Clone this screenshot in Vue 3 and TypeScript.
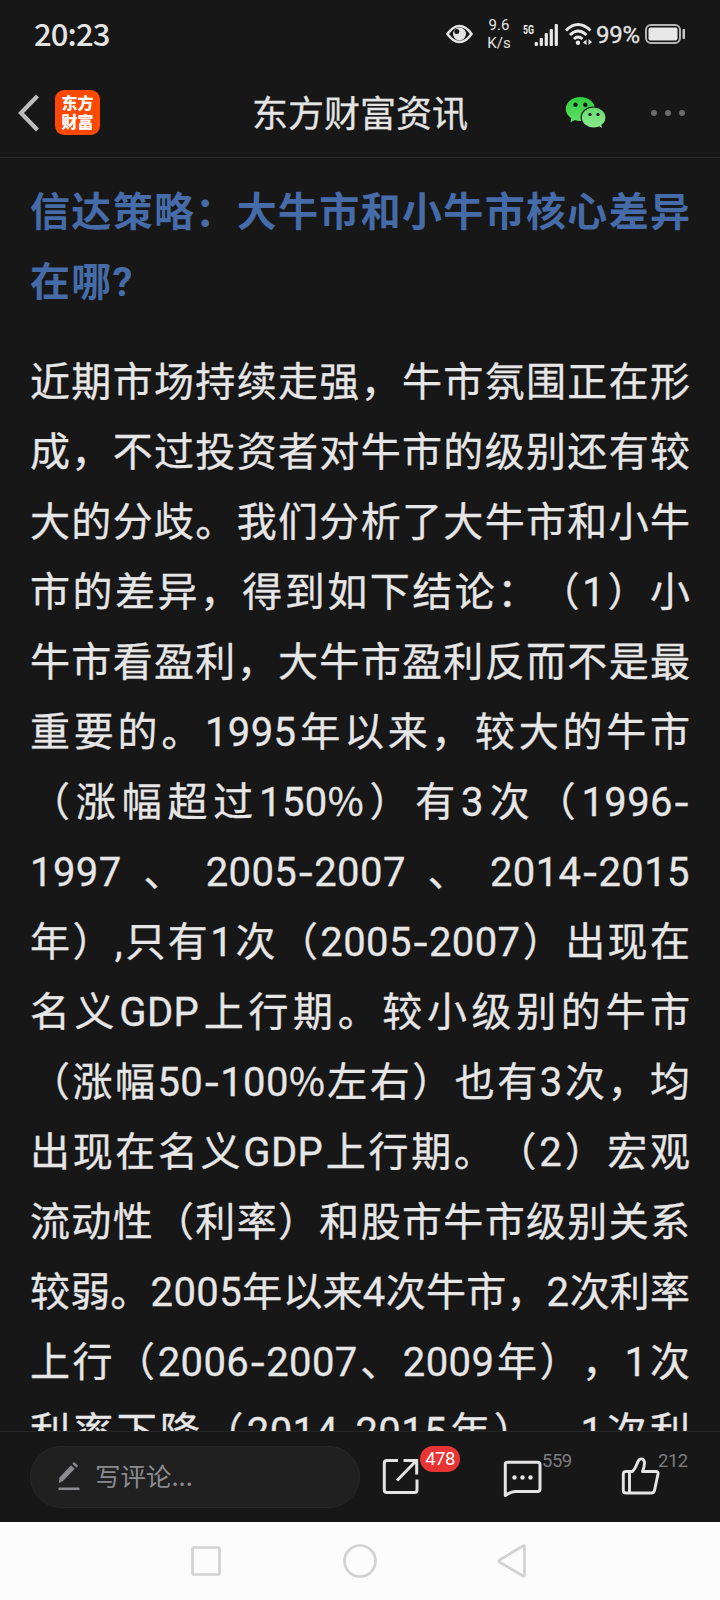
<script setup lang="ts">
interface Run {
  text: string
  kind: 'cjk' | 'latin' | 'dash' | 'pct'
}

const titleLines: string[] = ['信达策略：大牛市和小牛市核心差异', '在哪?']

const bodyLines: string[] = [
  '近期市场持续走强，牛市氛围正在形',
  '成，不过投资者对牛市的级别还有较',
  '大的分歧。我们分析了大牛市和小牛',
  '市的差异，得到如下结论：（1）小',
  '牛市看盈利，大牛市盈利反而不是最',
  '重要的。1995年以来，较大的牛市',
  '（涨幅超过150%）有3次（1996-',
  '1997、2005-2007、2014-2015',
  '年）,只有1次（2005-2007）出现在',
  '名义GDP上行期。较小级别的牛市',
  '（涨幅50-100%左右）也有3次，均',
  '出现在名义GDP上行期。（2）宏观',
  '流动性（利率）和股市牛市级别关系',
  '较弱。2005年以来4次牛市，2次利率',
  '上行（2006-2007、2009年），1次',
  '利率下降（2014-2015年），1次利',
]

function toRuns(line: string): Run[] {
  const parts = line.match(/-|%|[0-9A-Z,]+|[^0-9A-Z,%-]+/g) ?? []
  return parts.map((text): Run => {
    if (text === '-') return { text, kind: 'dash' }
    if (text === '%') return { text, kind: 'pct' }
    return { text, kind: /^[0-9A-Z,]/.test(text) ? 'latin' : 'cjk' }
  })
}

const paragraphs: Run[][] = bodyLines.map(toRuns)
</script>

<template>
  <div class="screen">
    <div class="status">
      <span class="time">20:23</span>
      <div class="tray">
        <svg class="eye" width="27" height="20" viewBox="0 0 27 20">
          <path d="M1.500 10Q7 2 13.500 2T25.500 10Q20 18 13.500 18T1.500 10Z" fill="none" stroke="#e4e4e4" stroke-width="2.500" />
          <circle cx="13.500" cy="10" r="6.500" fill="#e4e4e4" />
          <circle cx="10.800" cy="7.600" r="2.500" fill="#171717" />
        </svg>
        <div class="speed"><span>9.6</span><span>K/s</span></div>
        <svg class="signal" width="36" height="26" viewBox="0 0 36 26">
          <text x="0" y="13" class="gen" textLength="11" lengthAdjust="spacingAndGlyphs">5G</text>
          <g fill="#e8e8e8">
            <rect x="11.700" y="21" width="3.200" height="4" rx="1" />
            <rect x="16.700" y="17" width="3.200" height="8" rx="1" />
            <rect x="21.700" y="12" width="3.200" height="13" rx="1" />
            <rect x="26.700" y="8" width="3.200" height="17" rx="1" />
            <rect x="31.700" y="3" width="3.200" height="22" rx="1" />
          </g>
        </svg>
        <svg class="wifi" width="27" height="24" viewBox="0 0 27 24">
          <g fill="none" stroke="#e8e8e8" stroke-width="2.900">
            <path d="M1 8.500Q13 -3.500 25.500 8.500" />
            <path d="M5 13Q13 5 21.500 13" />
            <path d="M9 17Q13 13 17.500 17" />
          </g>
          <circle cx="13" cy="20.800" r="2.200" fill="#e8e8e8" />
          <path d="M18 20.500L21.500 17.500V23ZM27 20L23.500 17V23Z" fill="#e8e8e8" />
        </svg>
        <span class="percent">99%</span>
        <svg class="battery" width="41" height="20" viewBox="0 0 41 20">
          <rect x="1" y="1" width="34" height="18" rx="5" fill="none" stroke="#b5b5b5" stroke-width="2" />
          <rect x="3.500" y="3.500" width="29" height="13" rx="2" fill="#e8e8e8" />
          <rect x="37.500" y="5" width="2.500" height="10" rx="1" fill="#c8c8c8" />
        </svg>
      </div>
    </div>

    <header class="header">
      <div class="side">
        <svg class="back" width="22" height="38" viewBox="0 0 22 38">
          <path d="M20.500 2L4 19L20.500 36" fill="none" stroke="#bcbcbc" stroke-width="4.200" />
        </svg>
        <div class="logo"><span>东方</span><span>财富</span></div>
      </div>
      <h1 class="name">东方财富资讯</h1>
      <div class="side end">
        <svg class="wechat" width="42" height="34" viewBox="0 0 42 34">
          <defs>
            <linearGradient id="wcBack" x1="0" y1="0" x2="0" y2="1">
              <stop offset="0" stop-color="#2fce3c" />
              <stop offset="1" stop-color="#5fe069" />
            </linearGradient>
            <linearGradient id="wcFront" x1="0" y1="0" x2="0" y2="1">
              <stop offset="0" stop-color="#65da6c" />
              <stop offset="1" stop-color="#8dec92" />
            </linearGradient>
          </defs>
          <path d="M15.300 1C23.500 1 30 6.200 30 13C30 19.700 23.500 25 15.300 25C13.500 25 11.500 24.600 10 24L5.500 26.200L6.300 22.200C3 20 .8 16.800 .8 13C.8 6.200 7.300 1 15.300 1Z" fill="url(#wcBack)" />
          <path d="M28.600 11C35.600 11 41 15.700 41 21.400C41 24.500 39.500 27.200 37 29.100L37.700 33L34 31C32.400 31.700 30.500 32 28.600 32C21.700 32 16.200 27.300 16.200 21.400C16.200 15.700 21.700 11 28.600 11Z" fill="url(#wcFront)" stroke="#171717" stroke-width="1.200" />
          <g fill="#171717">
            <circle cx="10.500" cy="8.800" r="2.200" />
            <circle cx="20.300" cy="8.800" r="2.200" />
            <circle cx="25" cy="18.400" r="1.600" />
            <circle cx="33" cy="18.400" r="1.600" />
          </g>
        </svg>
        <div class="more"><i></i><i></i><i></i></div>
      </div>
    </header>

    <main class="article">
      <h2 class="title">
        <span v-for="(line, i) in titleLines" :key="i" class="line" :class="{ last: i === titleLines.length - 1 }">{{ line }}</span>
      </h2>
      <p class="body">
        <span v-for="(runs, i) in paragraphs" :key="i" class="line"><span v-for="(run, j) in runs" :key="j" :class="run.kind">{{ run.text }}</span></span>
      </p>
    </main>

    <footer class="toolbar">
      <div class="comment">
        <svg width="22" height="30" viewBox="0 0 22 30">
          <g fill="#8b8b8f">
            <path d="M.8 22L1.500 16.500L13 4.300L16.700 7.800L5 20Z" />
            <path d="M14.300 2.800L16 1L20.200 5L18.300 6.600Z" />
            <rect x=".5" y="26.500" width="21" height="2.500" rx=".5" />
          </g>
        </svg>
        <span>写评论...</span>
      </div>
      <div class="action share">
        <svg width="38" height="38" viewBox="0 0 38 38">
          <g fill="none" stroke="#e4e4e4" stroke-width="3">
            <path d="M16 2.500H5Q2.300 2.500 2.300 5V32Q2.300 34.500 5 34.500H32.500Q35 34.500 35 32V21.500" />
            <path d="M21.500 2.500H34.700V16.500M34 3L15 22.500" />
          </g>
        </svg>
        <span class="badge">478</span>
      </div>
      <div class="action talk">
        <svg width="40" height="38" viewBox="0 0 40 38">
          <path d="M4.500 2.300H34.500Q37 2.300 37 4.500V29Q37 31.500 34.500 31.500H12Q7 32 2.300 35.500V4.500Q2.300 2.300 4.500 2.300Z" fill="none" stroke="#e4e4e4" stroke-width="3" stroke-linejoin="round" />
          <g fill="#e4e4e4">
            <circle cx="11.500" cy="17.500" r="2.200" />
            <circle cx="19.500" cy="17.500" r="2.200" />
            <circle cx="27.500" cy="17.500" r="2.200" />
          </g>
        </svg>
        <span class="count">559</span>
      </div>
      <div class="action like">
        <svg width="40" height="40" viewBox="0 0 40 40">
          <g fill="none" stroke="#e4e4e4" stroke-width="2.900" stroke-linejoin="round">
            <path d="M5 15.500H11.500C15 12 15.500 8.500 17.500 4.500C19.500 1.500 23.500 3 23.500 7C23.500 10 22.500 13 21.500 15.500H35Q37.500 15.500 37 18L33.500 34.500Q32.700 37 30.500 37H5Q2.300 37 2.300 34.500V18Q2.300 15.500 5 15.500Z" />
            <path d="M8.500 16V37" />
          </g>
        </svg>
        <span class="count">212</span>
      </div>
    </footer>

    <nav class="nav">
      <svg width="34" height="36" viewBox="0 0 34 36"><rect x="2.500" y="4.500" width="27" height="27" rx="1.500" /></svg>
      <svg width="36" height="36" viewBox="0 0 36 36"><circle cx="18" cy="18" r="15.500" /></svg>
      <svg width="32" height="36" viewBox="0 0 32 36"><path d="M28.500 3.500V32.500Q28.500 34 27 33L3.500 19Q2 18 3.500 17L27 3Q28.500 2 28.500 3.500Z" /></svg>
    </nav>
  </div>
</template>

<style>
body {
  margin: 0;
  background: #171717;
}
</style>

<style scoped>
.screen {
  display: flex;
  flex-direction: column;
  width: 720px;
  height: 1600px;
  overflow: hidden;
  background: #171717;
  color: #e4e4e4;
  font-family: Roboto, "Noto Sans CJK SC", sans-serif;
}
svg {
  display: block;
  flex: none;
}
.status {
  flex: none;
  height: 68px;
  display: flex;
  align-items: center;
  justify-content: space-between;
  padding: 0 34px;
  box-sizing: border-box;
}
.time {
  font: 500 31px/34px "Noto Sans CJK SC", sans-serif;
  letter-spacing: -0.9px;
  padding-bottom: 3px;
}
.tray {
  display: flex;
  align-items: center;
}
.speed {
  display: flex;
  flex-direction: column;
  align-items: center;
  width: 24px;
  margin: -1px 12px 0 14px;
  font-size: 15px;
  line-height: 18px;
}
.speed span {
  white-space: nowrap;
}
.gen {
  font: 700 13px Roboto, sans-serif;
  fill: #e8e8e8;
}
.signal {
  margin-right: 6px;
}
.wifi {
  margin-right: 4px;
}
.percent {
  width: 49px;
  font-size: 24px;
  line-height: 30px;
  letter-spacing: -0.3px;
  padding-top: 1px;
  -webkit-text-stroke: 0.3px currentColor;
}
.battery {
  flex: none;
}
.header {
  flex: none;
  height: 90px;
  box-sizing: border-box;
  border-bottom: 1px solid #282828;
  display: grid;
  grid-template-columns: 1fr auto 1fr;
  align-items: center;
}
.side {
  display: flex;
  align-items: center;
}
.back {
  margin-left: 17px;
}
.logo {
  display: flex;
  flex-direction: column;
  align-items: center;
  justify-content: center;
  width: 45px;
  height: 45px;
  margin-left: 16px;
  border-radius: 9px;
  background: #ff4800;
  color: #fff;
  font: 900 16px/19px "Noto Sans CJK SC", sans-serif;
}
.logo span {
  position: relative;
  top: -1px;
}
.name {
  margin: 0;
  padding-bottom: 4px;
  font: 400 36px/50px "Noto Sans CJK SC", sans-serif;
  -webkit-text-stroke: 0.3px currentColor;
}
.end {
  justify-content: flex-end;
}
.more {
  display: flex;
  gap: 8px;
  margin: 0 35px 0 44px;
}
.more i {
  width: 6px;
  height: 6px;
  border-radius: 50%;
  background: #6b6b6b;
}
.article {
  flex: none;
  height: 1273px;
  box-sizing: border-box;
  padding: 20px 30px 0;
  overflow: hidden;
}
.title,
.body {
  margin: 0;
  font-size: 40px;
  line-height: 70px;
  text-spacing-trim: space-all;
}
.title {
  color: #456ba8;
  font-weight: 700;
}
.body {
  margin-top: 30px;
  font-weight: 400;
  color: #e6e6e6;
  -webkit-text-stroke: 0.3px currentColor;
}
.line {
  display: block;
  height: 70px;
  white-space: nowrap;
  text-align: justify;
  text-align-last: justify;
}
.line.last {
  text-align-last: left;
  letter-spacing: 1.25px;
}
.latin {
  letter-spacing: 0.4px;
}
.dash {
  font-family: Inter, sans-serif;
  font-size: 37px;
}
.pct {
  font-family: "Noto Sans CJK SC", sans-serif;
  font-size: 39px;
  line-height: 1;
}
.toolbar {
  flex: none;
  height: 91px;
  box-sizing: border-box;
  border-top: 1px solid #262626;
  display: flex;
  align-items: flex-start;
  padding: 14px 0 0 30px;
}
.comment {
  flex: none;
  width: 330px;
  height: 62px;
  box-sizing: border-box;
  padding-left: 27px;
  border: 1px solid #272727;
  border-radius: 31px;
  background: #202020;
  display: flex;
  align-items: center;
  gap: 15px;
  color: #8b8b8f;
  font: 400 25.5px/36px "Noto Sans CJK SC", sans-serif;
}
.comment svg {
  margin-bottom: 2px;
}
.comment span {
  padding-bottom: 5px;
}
.action {
  position: relative;
  flex: none;
}
.share {
  margin: 12px 0 0 22px;
}
.talk {
  margin: 14px 0 0 83px;
}
.like {
  margin: 10px 0 0 78px;
}
.badge,
.count {
  position: absolute;
  font-size: 18.5px;
  white-space: nowrap;
}
.badge {
  left: 38px;
  top: -12px;
  width: 40px;
  height: 26px;
  border-radius: 13px;
  background: #e93434;
  color: #fff;
  line-height: 26px;
  text-align: center;
  letter-spacing: -0.5px;
}
.count {
  left: 39px;
  top: -10px;
  line-height: 22px;
  color: #7c7c7e;
  letter-spacing: -0.5px;
}
.like .count {
  left: 37px;
  top: -6px;
}
.nav {
  flex: 1;
  background: #fcfcfc;
  display: flex;
  justify-content: center;
  align-items: center;
  gap: 118px;
  padding-right: 2px;
}
.nav svg {
  fill: none;
  stroke: #d2d2d2;
  stroke-width: 2.7;
}
</style>
